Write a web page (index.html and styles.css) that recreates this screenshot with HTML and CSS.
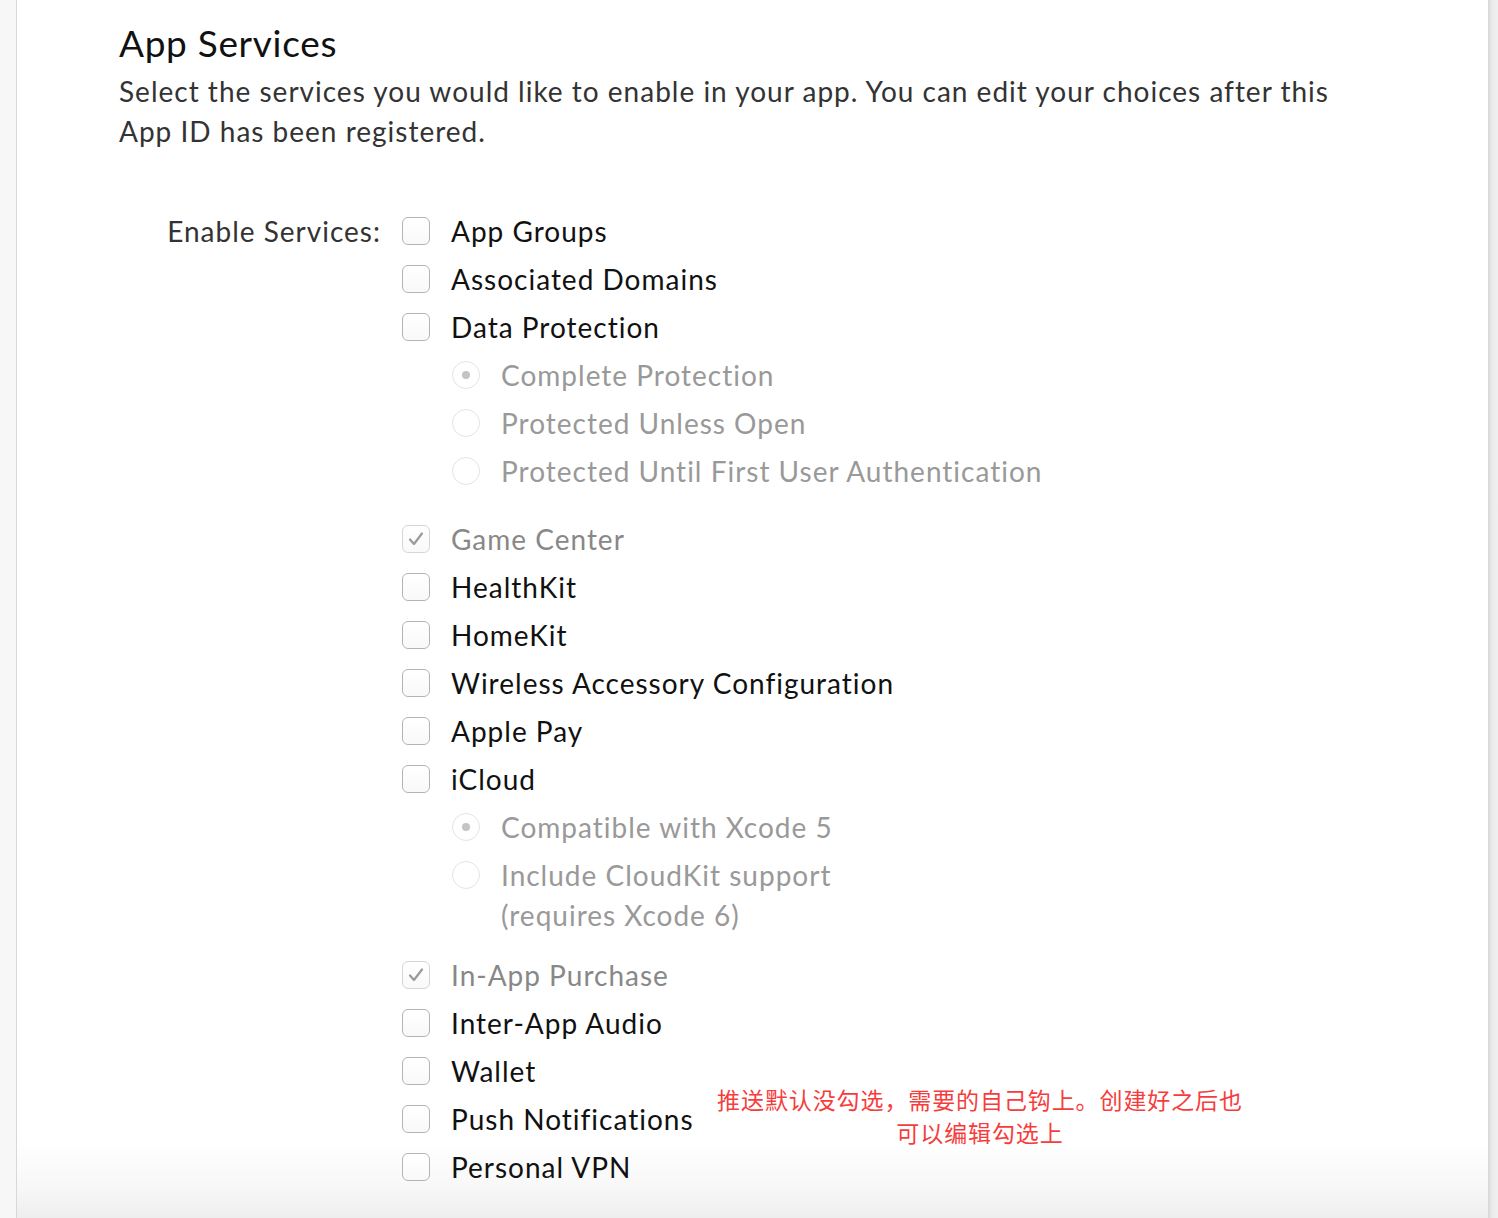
FILE: index.html
```html
<!DOCTYPE html>
<html lang="en">
<head>
<meta charset="utf-8">
<title>App Services</title>
<link rel="stylesheet" href="styles.css">
</head>
<body>
<div class="page">
  <main class="panel">
    <h1 class="title">App Services</h1>
    <p class="desc">Select the services you would like to enable in your app. You can edit your choices after this App ID has been registered.</p>

    <div class="services">
      <div class="services-label">Enable Services:</div>
      <div class="services-list">
        <label class="row"><span class="box"></span><span class="text">App Groups</span></label>
        <label class="row"><span class="box"></span><span class="text">Associated Domains</span></label>
        <label class="row"><span class="box"></span><span class="text">Data Protection</span></label>
        <div class="sub">
          <label class="row row-disabled"><span class="radio radio-on"></span><span class="text">Complete Protection</span></label>
          <label class="row row-disabled"><span class="radio"></span><span class="text">Protected Unless Open</span></label>
          <label class="row row-disabled"><span class="radio"></span><span class="text">Protected Until First User Authentication</span></label>
        </div>
        <label class="row row-checked"><span class="box box-checked"><svg viewBox="0 0 28 28" width="28" height="28"><path d="M8 14.5 L12 19 L20 8.5" fill="none" stroke="#9a9a9a" stroke-width="2.2" stroke-linecap="round" stroke-linejoin="round"/></svg></span><span class="text">Game Center</span></label>
        <label class="row"><span class="box"></span><span class="text">HealthKit</span></label>
        <label class="row"><span class="box"></span><span class="text">HomeKit</span></label>
        <label class="row"><span class="box"></span><span class="text">Wireless Accessory Configuration</span></label>
        <label class="row"><span class="box"></span><span class="text">Apple Pay</span></label>
        <label class="row"><span class="box"></span><span class="text">iCloud</span></label>
        <div class="sub sub-tight">
          <label class="row row-disabled"><span class="radio radio-on"></span><span class="text">Compatible with Xcode 5</span></label>
          <label class="row row-disabled row-wrap"><span class="radio"></span><span class="text">Include CloudKit support<br>(requires Xcode 6)</span></label>
        </div>
        <label class="row row-checked"><span class="box box-checked"><svg viewBox="0 0 28 28" width="28" height="28"><path d="M8 14.5 L12 19 L20 8.5" fill="none" stroke="#9a9a9a" stroke-width="2.2" stroke-linecap="round" stroke-linejoin="round"/></svg></span><span class="text">In-App Purchase</span></label>
        <label class="row"><span class="box"></span><span class="text">Inter-App Audio</span></label>
        <label class="row"><span class="box"></span><span class="text">Wallet</span></label>
        <label class="row"><span class="box"></span><span class="text">Push Notifications</span></label>
        <label class="row"><span class="box"></span><span class="text">Personal VPN</span></label>
      </div>
    </div>

    <div class="note">推送默认没勾选，需要的自己钩上。创建好之后也<br>可以编辑勾选上</div>
  </main>
</div>
</body>
</html>
```

FILE: styles.css
```css
html, body {
  margin: 0;
  padding: 0;
}
body {
  background: #f6f6f6;
  font-family: "Lato", "Liberation Sans", "Noto Sans CJK SC", sans-serif;
  color: #111;
}
.page {
  height: 1218px;
  overflow: hidden;
  padding-left: 16px;
  padding-right: 10px;
  background: linear-gradient(to right, #f7f7f7 0, #f7f7f7 16px, transparent 16px),
              linear-gradient(to right, transparent calc(100% - 10px), #d6d6d6 calc(100% - 10px), #ebebeb calc(100% - 6px), #efefef 100%);
}
.panel {
  position: relative;
  height: 1218px;
  box-sizing: border-box;
  border-left: 1px solid #d8d8d8;
  background: linear-gradient(to bottom, #ffffff 0, #ffffff 1140px, #f8f8f8 1185px, #eeeeee 1218px);
  padding: 20px 0 0 102px;
}
.title {
  margin: 0;
  font-weight: 400;
  font-size: 37px;
  line-height: 46px;
  letter-spacing: 0.7px;
  color: #111;
}
.desc {
  margin: 5px 0 0;
  width: 1250px;
  font-size: 28px;
  line-height: 40px;
  letter-spacing: 1px;
  color: #333;
}
.services {
  display: flex;
  align-items: flex-start;
  margin-top: 56px;
}
.services-label {
  width: 283px;
  text-align: right;
  padding-right: 21px;
  font-size: 28px;
  line-height: 48px;
  letter-spacing: 1px;
  color: #333;
  box-sizing: border-box;
}
.services-list {
  display: flex;
  flex-direction: column;
}
.row {
  display: flex;
  align-items: flex-start;
  gap: 21px;
  font-size: 28px;
  line-height: 48px;
  letter-spacing: 1px;
  color: #111;
}
.row .text {
  white-space: nowrap;
}
.row-disabled .text {
  color: #999;
}
.row-checked .text {
  color: #888;
}
.row-wrap {
  line-height: 40px;
  padding-top: 4px;
}
.row-wrap .radio {
  margin-top: 6px;
}
.box {
  flex: none;
  width: 26px;
  height: 26px;
  margin-top: 10px;
  border: 1px solid #b4b4b4;
  border-radius: 6px;
  background: linear-gradient(to bottom, #ffffff, #f9f9f9);
  display: flex;
  align-items: center;
  justify-content: center;
}
.box-checked {
  border-color: #d6d6d6;
}
.box-checked svg {
  display: block;
  flex: none;
}
.radio {
  flex: none;
  width: 26px;
  height: 26px;
  margin-top: 10px;
  border: 1px solid #e4e4e4;
  border-radius: 50%;
  background: #fff;
  display: flex;
  align-items: center;
  justify-content: center;
}
.radio-on::after {
  content: "";
  width: 8px;
  height: 8px;
  border-radius: 50%;
  background: #c4c4c4;
}
.sub {
  margin-left: 50px;
  margin-bottom: 20px;
}
.sub-tight {
  margin-bottom: 16px;
}
.note {
  position: absolute;
  left: 663px;
  top: 1083px;
  width: 600px;
  text-align: center;
  font-family: "Noto Sans CJK SC", sans-serif;
  font-size: 23px;
  line-height: 33px;
  letter-spacing: 0.9px;
  color: #f63d3d;
}
```
